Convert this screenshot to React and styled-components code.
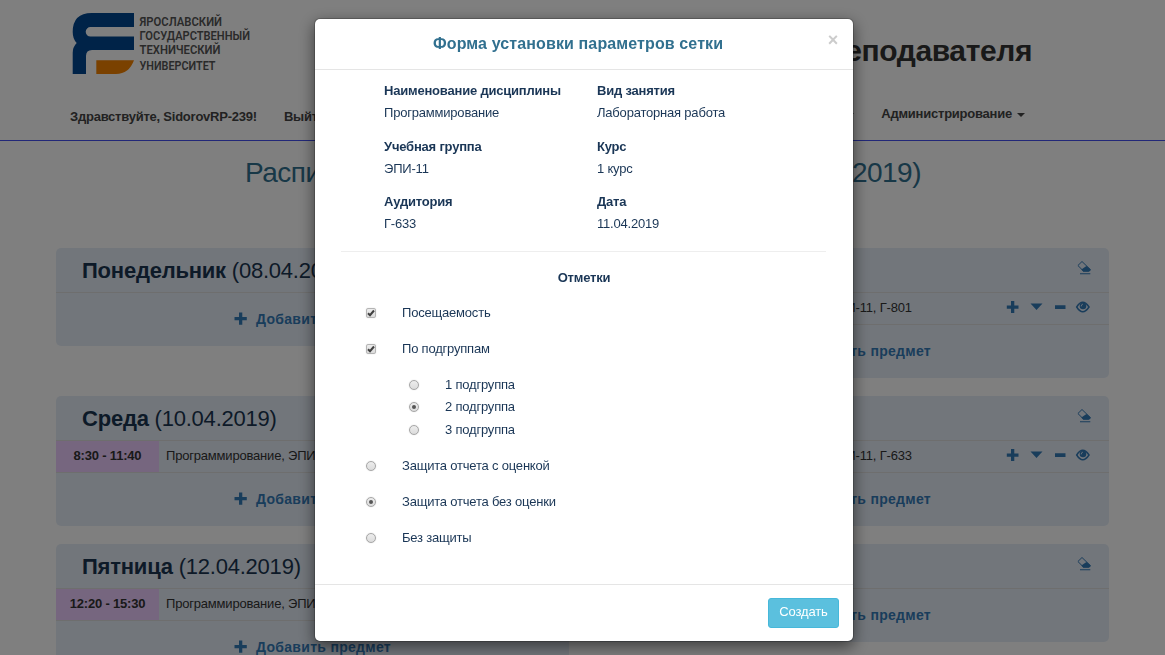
import React from 'react';
import styled, { createGlobalStyle } from 'styled-components';

const GlobalStyle = createGlobalStyle`
  * { box-sizing: border-box; }
  html, body { margin: 0; height: 100%; overflow: hidden; }
  body {
    background: #fff;
    color: #333;
    font: 14px/20px "Liberation Sans", Arial, sans-serif;
  }
`;

const Page = styled.div`
  height: 655px;
  overflow: hidden;
`;

const Header = styled.header`
  height: 141px;
  border-bottom: 1px solid #4450f0;
  padding: 10px 133px 0 70px;
`;

const Brand = styled.div`
  display: flex;
  justify-content: space-between;
  align-items: flex-start;
  height: 84px;
`;

const SiteTitle = styled.h1`
  margin: 24px 0 0;
  font-size: 30px;
  line-height: 34px;
  letter-spacing: -0.4px;
  font-weight: bold;
  color: #333;
`;

const Nav = styled.nav`
  display: flex;
  font-size: 13px;
  font-weight: bold;
  letter-spacing: -0.23px;
  color: #444;
  padding-right: 7px;
`;

const NavItem = styled.span`
  margin: ${(p) => p.$top || 0}px ${(p) => p.$gap || 0}px 0 0;
  white-space: nowrap;
`;

const NavMenu = styled.div`
  display: flex;
  margin-left: auto;
`;

const Caret = styled.i`
  display: inline-block;
  margin-left: 5px;
  vertical-align: middle;
  border: 4px solid transparent;
  border-top-color: currentColor;
  border-bottom: 0;
`;

const WeekTitle = styled.h2`
  display: flex;
  justify-content: space-between;
  margin: 15px 244px 58px 245px;
  font-size: 28px;
  line-height: 34px;
  letter-spacing: -0.5px;
  font-weight: normal;
  color: #31708f;
`;

const Week = styled.main`
  display: grid;
  grid-template-columns: 513px 513px;
  column-gap: 27px;
  row-gap: 18px;
  align-items: start;
  padding-left: 56px;
`;

const Card = styled.section`
  background: #e5edf7;
  border-radius: 5px;
  overflow: hidden;
`;

const CardHead = styled.header`
  display: flex;
  justify-content: space-between;
  height: 44px;
  padding: 0 18px 0 26px;
  font-size: 22px;
  line-height: 45px;
  letter-spacing: -0.22px;
  color: #1a3550;
`;

const Eraser = styled.svg`
  margin-top: 13px;
  color: #337ab7;
`;

const Lesson = styled.div`
  display: flex;
  align-items: stretch;
  height: 32px;
  border-top: 1px solid #ddd;
  font-size: 13px;
  line-height: 30px;
  letter-spacing: -0.19px;
`;

const Time = styled.b`
  width: 103px;
  background: #eccdff;
  text-align: center;
`;

const Subject = styled.span`
  padding-left: 7px;
  flex: 1;
`;

const Tools = styled.span`
  display: flex;
  padding: 6px 18px 0 0;
  color: #337ab7;
`;

const AddRow = styled.div`
  display: flex;
  height: 54px;
  padding: 0 0 0 178px;
  border-top: 1px solid #ddd;
  line-height: 53px;
  font-weight: bold;
  letter-spacing: 0.3px;
  color: #337ab7;
  svg { margin: 19px 9px 0 0; }
`;

const Backdrop = styled.div`
  position: fixed;
  inset: 0;
  padding: 18px 0 0 314px;
  background: rgba(0, 0, 0, 0.5);
`;

const Dialog = styled.div`
  width: 540px;
  height: 624px;
  display: flex;
  flex-direction: column;
  border: 1px solid rgba(0, 0, 0, 0.2);
  border-radius: 6px;
  background: #fff;
  background-clip: padding-box;
  box-shadow: 0 5px 15px rgba(0, 0, 0, 0.5);
  color: #1a3656;
  font-size: 13px;
  letter-spacing: -0.2px;
`;

const DialogHead = styled.header`
  display: flex;
  height: 51px;
  padding: 14px 15px 0 118px;
  border-bottom: 1px solid #e5e5e5;
`;

const DialogTitle = styled.h4`
  flex: 1;
  margin: 0;
  font-size: 16px;
  line-height: 22px;
  letter-spacing: 0.12px;
  color: #31708f;
`;

const Close = styled.span`
  font-size: 18px;
  font-weight: bold;
  line-height: 14px;
  color: #ccc;
`;

const Details = styled.dl`
  display: grid;
  grid-template-columns: 213px 200px;
  margin: 0 27px 0 26px;
  padding: 10px 0 4px 43px;
  border-bottom: 1px solid #eee;
`;

const Detail = styled.div`
  height: 55.5px;
  dt { font-weight: bold; line-height: 22px; }
  dd { margin: 0; line-height: 21.5px; }
`;

const MarksTitle = styled.b`
  display: block;
  margin-top: 16px;
  text-align: center;
`;

const Options = styled.div`
  flex: 1;
  padding: 7px 0 0 51px;
`;

const Option = styled.label`
  display: flex;
  align-items: center;
  height: 36px;
  gap: 26px;
`;

const SubOptions = styled.div`
  padding: 7px 0 7px 43px;
`;

const SubOption = styled(Option)`
  height: 22.5px;
`;

const Mark = styled.span`
  display: flex;
  align-items: center;
  justify-content: center;
  width: 10px;
  height: 10px;
  border: 1px solid ${(p) => (p.$round ? '#a6a6a6' : '#b4b4b4')};
  border-radius: ${(p) => (p.$round ? '50%' : '2px')};
  background: linear-gradient(#ededed, #dcdcdc);
  box-shadow: 0 0 1px rgba(0, 0, 0, 0.25);
`;

const Dot = styled.i`
  width: 4px;
  height: 4px;
  border-radius: 50%;
  background: #555;
`;

const DialogFoot = styled.footer`
  display: flex;
  justify-content: flex-end;
  height: 57px;
  padding: 13px 14px 0;
  border-top: 1px solid #e5e5e5;
`;

const Submit = styled.button`
  width: 71px;
  height: 30px;
  padding: 0 0 3px;
  border: 1px solid #46b8da;
  border-radius: 3px;
  background: #5bc0de;
  color: #fff;
  font: 13px/20px "Liberation Sans", Arial, sans-serif;
  letter-spacing: -0.15px;
`;

const Logo = () => (
  <svg width="184" height="66" viewBox="70 10 184 66">
    <path fill="#004690" d="M134 13v14H90.500a4.700 4.700 0 0 0 0 9.600H134V50H92q-6 0-6 6v18H72.700V53q0-6 4-10-4-4-4-11 0-19 19-19z" />
    <path fill="#f48200" d="M96.300 60.300H134Q129 74 116 74H96.300z" />
    <g fill="#555" fontFamily="Roboto, sans-serif" fontSize="12.300" fontWeight="600">
      <text x="139.500" y="25.700" textLength="82.500" lengthAdjust="spacingAndGlyphs">ЯРОСЛАВСКИЙ</text>
      <text x="139.500" y="39.700" textLength="110.500" lengthAdjust="spacingAndGlyphs">ГОСУДАРСТВЕННЫЙ</text>
      <text x="139.500" y="54.300" textLength="81" lengthAdjust="spacingAndGlyphs">ТЕХНИЧЕСКИЙ</text>
      <text x="139.500" y="69.800" textLength="76" lengthAdjust="spacingAndGlyphs">УНИВЕРСИТЕТ</text>
    </g>
  </svg>
);

const PlusIcon = () => (
  <svg width="13" height="13" viewBox="0 0 13 13">
    <path fill="currentColor" d="M5 .5h3.300V5h4.500v3.200H8.300v4.500H5V8.200H.5V5H5z" />
  </svg>
);

const EraserIcon = () => (
  <Eraser width="14" height="14" viewBox="0 0 14 14">
    <path fill="none" stroke="currentColor" strokeWidth="1" d="M5 .5.9 4.500l5.400 5.400h5.400l1.500-1.500z" />
    <path fill="currentColor" d="M9.500 5 13.700 8.500v.7L12 10.700H6.300L4.300 8.600 6.500 7zM3 12.200h10.300v1H3z" />
  </Eraser>
);

const RowTools = () => (
  <Tools>
    <svg width="85" height="16" viewBox="1006 299 85 16">
      <path fill="currentColor" d="M1011 301h3.300v4.500h4.200v3.200h-4.200v4.300h-3.300v-4.300h-4.200v-3.200h4.200zM1030.500 303.500h12l-6 6.500zM1055 305.300h10.500v3.700H1055z" />
      <path fill="none" stroke="currentColor" strokeWidth="1.500" d="M1076.700 307q6-9.500 12.300 0-6.300 9.500-12.300 0z" />
      <circle cx="1083" cy="306" r="3.300" fill="currentColor" />
      <path d="M1081.200 306.400q0-2 1.700-2.300" fill="none" stroke="#e5edf7" strokeWidth=".9" />
    </svg>
  </Tools>
);

const days = [
  { name: 'Понедельник', date: '08.04.2019' },
  { name: 'Вторник', date: '09.04.2019', time: '8:30 - 11:40', room: 'Г-801' },
  { name: 'Среда', date: '10.04.2019', time: '8:30 - 11:40', room: 'Г-633' },
  { name: 'Четверг', date: '11.04.2019', time: '8:30 - 11:40', room: 'Г-633' },
  { name: 'Пятница', date: '12.04.2019', time: '12:20 - 15:30', room: 'Г-633' },
  { name: 'Суббота', date: '13.04.2019' },
];

const Day = ({ name, date, time, room }) => (
  <Card>
    <CardHead>
      <span><b>{name}</b> ({date})</span>
      <EraserIcon />
    </CardHead>
    {time && (
      <Lesson>
        <Time>{time}</Time>
        <Subject>Программирование, ЭПИ-11, {room}</Subject>
        <RowTools />
      </Lesson>
    )}
    <AddRow><PlusIcon />Добавить предмет</AddRow>
  </Card>
);

const details = [
  ['Наименование дисциплины', 'Программирование'],
  ['Вид занятия', 'Лабораторная работа'],
  ['Учебная группа', 'ЭПИ-11'],
  ['Курс', '1 курс'],
  ['Аудитория', 'Г-633'],
  ['Дата', '11.04.2019'],
];

const Check = () => (
  <Mark>
    <svg width="8" height="8" viewBox="0 0 8 8">
      <path d="M1 4.200 3 6.200 7 1.500" fill="none" stroke="#404040" strokeWidth="2" />
    </svg>
  </Mark>
);

const Radio = ({ on }) => <Mark $round>{on && <Dot />}</Mark>;

export default function App() {
  return (
    <>
      <GlobalStyle />
      <Page>
        <Header>
          <Brand>
            <Logo />
            <SiteTitle>преподавателя</SiteTitle>
          </Brand>
          <Nav>
            <NavItem $top={13} $gap={27}>Здравствуйте, SidorovRP-239!</NavItem>
            <NavItem $top={13}>Выйти</NavItem>
            <NavMenu>
              <NavItem $top={10} $gap={27}><Caret /></NavItem>
              <NavItem $top={10}>Администрирование<Caret /></NavItem>
            </NavMenu>
          </Nav>
        </Header>
        <WeekTitle><span>Расписание</span><span>14.04.2019)</span></WeekTitle>
        <Week>{days.map((d) => <Day key={d.name} {...d} />)}</Week>
      </Page>
      <Backdrop>
        <Dialog>
          <DialogHead>
            <DialogTitle>Форма установки параметров сетки</DialogTitle>
            <Close>×</Close>
          </DialogHead>
          <Details>
            {details.map(([k, v]) => <Detail key={k}><dt>{k}</dt><dd>{v}</dd></Detail>)}
          </Details>
          <MarksTitle>Отметки</MarksTitle>
          <Options>
            <Option><Check />Посещаемость</Option>
            <Option><Check />По подгруппам</Option>
            <SubOptions>
              <SubOption><Radio />1 подгруппа</SubOption>
              <SubOption><Radio on />2 подгруппа</SubOption>
              <SubOption><Radio />3 подгруппа</SubOption>
            </SubOptions>
            <Option><Radio />Защита отчета с оценкой</Option>
            <Option><Radio on />Защита отчета без оценки</Option>
            <Option><Radio />Без защиты</Option>
          </Options>
          <DialogFoot><Submit>Создать</Submit></DialogFoot>
        </Dialog>
      </Backdrop>
    </>
  );
}
